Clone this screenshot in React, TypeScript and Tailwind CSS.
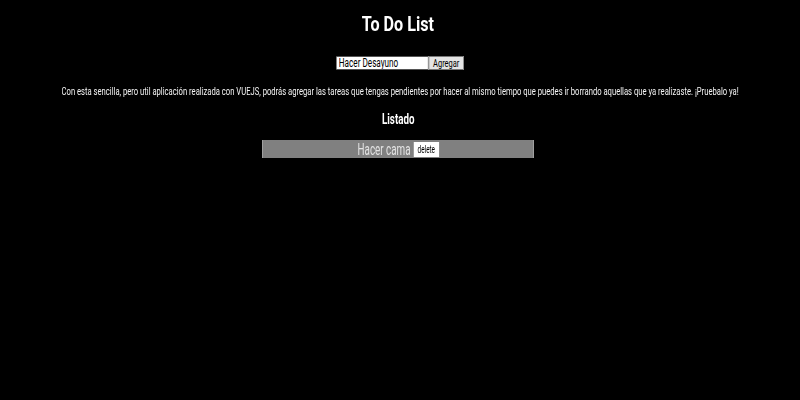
import React, { useState } from 'react';

const font = { fontFamily: "Roboto, 'Liberation Sans', sans-serif" };

export default function App() {
  const [task, setTask] = useState('Hacer Desayuno');
  const [tasks, setTasks] = useState<string[]>(['Hacer cama']);

  const addTask = () => {
    if (!task.trim()) return;
    setTasks([...tasks, task]);
    setTask('');
  };

  return (
    <div className="w-[800px] h-[400px] bg-black text-white flex flex-col items-center overflow-hidden antialiased" style={font}>
      {/* the page looks squeezed sideways, so each line is narrowed with scale-x */}
      <h1 className="mt-[14px] mr-[4px] text-[21px] leading-none font-bold whitespace-nowrap scale-x-[0.77] transform-gpu">To Do List</h1>

      <div className="mt-[21px] flex h-[14px] scale-x-[0.68] transform-gpu">
        <input
          value={task}
          onChange={e => setTask(e.target.value)}
          className="w-[136px] h-[14px] bg-white text-black text-[12px] px-[3px] border border-[#555] outline-none"
          style={font}
        />
        <button
          onClick={addTask}
          className="w-[52px] h-[14px] bg-[#e4e4e4] text-black text-[11px] leading-none border border-[#777]"
          style={font}
        >
          Agregar
        </button>
      </div>

      <p className="mt-[16px] text-[11px] leading-none text-[#f4f4f4] whitespace-nowrap scale-x-[0.695] transform-gpu">
        Con esta sencilla, pero util aplicación realizada con VUEJS, podrás agregar las tareas que tengas pendientes por hacer al mismo tiempo que puedes ir borrando aquellas que ya realizaste. ¡Pruebalo ya!
      </p>

      <h2 className="mt-[15px] mr-[4px] text-[14px] leading-none font-bold whitespace-nowrap scale-x-[0.7] transform-gpu">Listado</h2>

      <ul className="mt-[14px] mr-[4px] w-[272px] flex flex-col">
        {tasks.map((t, i) => (
          <li key={i} className="h-[18px] bg-[#808080] border-x border-[#a0a0a0] flex items-center justify-center">
            <div className="flex items-center gap-[5px] scale-x-[0.58] transform-gpu">
              <span className="text-[17px] leading-none text-[#e2e2e2] whitespace-nowrap">{t}</span>
              <button
                onClick={() => setTasks(tasks.filter((_, j) => j !== i))}
                className="h-[15px] w-[44px] bg-white text-black text-[11px] leading-none"
                style={font}
              >
                delete
              </button>
            </div>
          </li>
        ))}
      </ul>
    </div>
  );
}
